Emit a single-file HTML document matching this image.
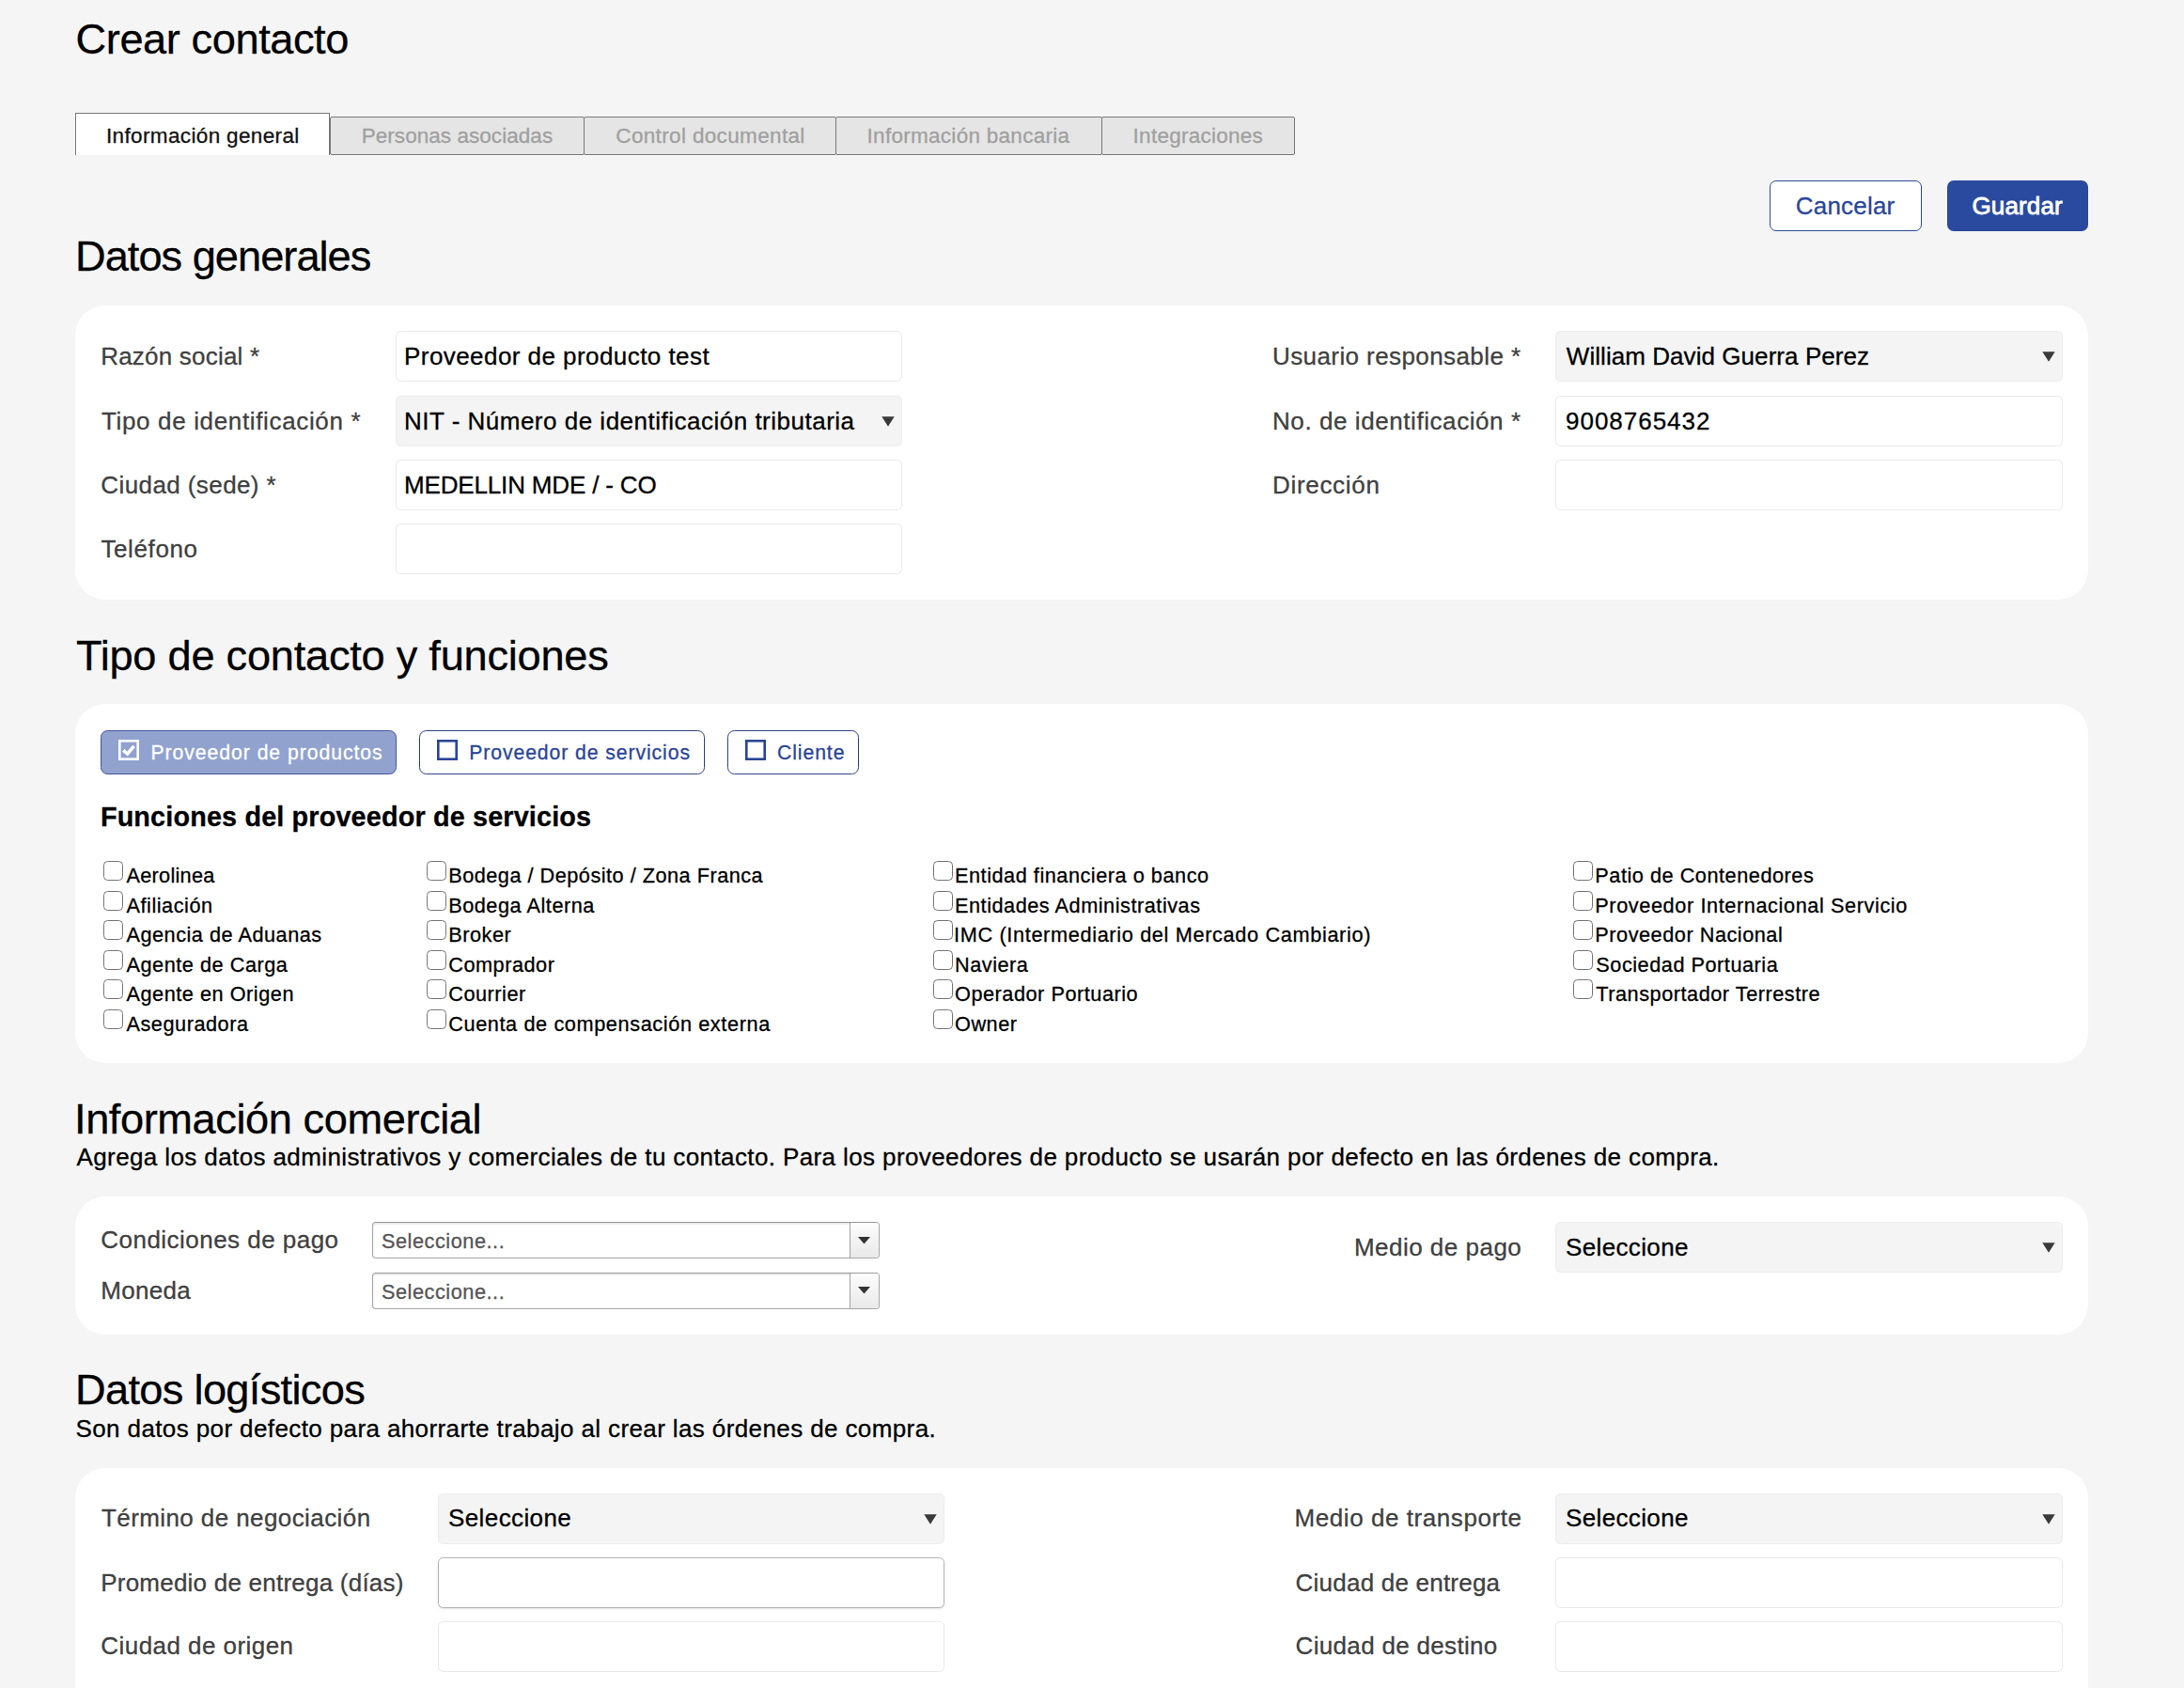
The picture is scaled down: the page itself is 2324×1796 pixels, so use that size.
<!DOCTYPE html>
<html lang="es"><head><meta charset="utf-8"><title>Crear contacto</title>
<style>
html,body{margin:0;padding:0}
@media (max-width:1400px){html{zoom:.5}}
body{width:2324px;height:1796px;overflow:hidden;background:#f5f5f5;font-family:"Liberation Sans",sans-serif;position:relative}
.t{position:absolute;margin:0;padding:0;white-space:nowrap;line-height:1;font-weight:400;-webkit-text-stroke:0.3px}
.abs{position:absolute;display:block}
.card{position:absolute;background:#fff;border-radius:32px}
.tab{position:absolute;box-sizing:border-box;background:#e5e5e5;border:1.5px solid #787878;border-radius:2px}
.tab.on{background:#fff;border-bottom:none;border-radius:0}
.btn-o{position:absolute;box-sizing:border-box;background:#fff;border:1.5px solid #2a4799;border-radius:7px}
.btn-f{position:absolute;box-sizing:border-box;background:#2a4a9f;border-radius:7px}
.inp{position:absolute;box-sizing:border-box;background:#fff;border:1.4px solid #e9e9e9;border-radius:5.5px}
.inp.foc{border-color:#b4b4b4;box-shadow:0 1px 2.5px rgba(0,0,0,.12)}
.sel{position:absolute;box-sizing:border-box;background:#f4f4f4;border:1.4px solid #ececec;border-radius:5.5px}
.tb{position:absolute;box-sizing:border-box;background:#fff;border:1.5px solid #2f4289;border-radius:7.5px}
.tb.on{background:#91a2cf;border-color:#42549a}
.cb{position:absolute;box-sizing:border-box;width:21px;height:21px;background:#fff;border:1.8px solid #767676;border-radius:4.5px}
.combo{position:absolute;box-sizing:border-box;background:#fff;border:1.5px solid #a6a6a6;border-top-color:#999;border-radius:4px;box-shadow:inset 0 1.5px 2px rgba(0,0,0,.12)}
.combo i{position:absolute;right:0;top:0;bottom:0;width:29.5px;border-left:1.5px solid #a0a0a0;background:linear-gradient(#fdfdfd,#e9e9e9);border-radius:0 3px 3px 0}
</style></head>
<body>
<main>
<header>
<div class="tab on" style="left:80px;top:120px;width:271px;height:45px"></div>
<div class="tab" style="left:350.5px;top:124px;width:271.2px;height:41px"></div>
<div class="tab" style="left:620.5px;top:124px;width:269.0px;height:41px"></div>
<div class="tab" style="left:888.5px;top:124px;width:284.0px;height:41px"></div>
<div class="tab" style="left:1171.5px;top:124px;width:206.5px;height:41px"></div>
<div class="btn-o" style="left:1883px;top:192px;width:162px;height:54px"></div>
<div class="btn-f" style="left:2072px;top:192px;width:150px;height:54px"></div>
<h1 class="t" style="left:80.6px;top:19.0px;font-size:45.2px;letter-spacing:-0.43px;color:#000">Crear contacto</h1>
<span class="t" style="left:113.0px;top:134.2px;font-size:22.5px;letter-spacing:0.36px;color:#111">Información general</span>
<span class="t" style="left:384.7px;top:134.2px;font-size:22.5px;letter-spacing:0.05px;color:#a0a0a0">Personas asociadas</span>
<span class="t" style="left:655.3px;top:134.2px;font-size:22.5px;letter-spacing:0.35px;color:#a0a0a0">Control documental</span>
<span class="t" style="left:922.6px;top:134.2px;font-size:22.5px;letter-spacing:0.28px;color:#a0a0a0">Información bancaria</span>
<span class="t" style="left:1205.6px;top:134.2px;font-size:22.5px;letter-spacing:0.26px;color:#a0a0a0">Integraciones</span>
<span class="t" style="left:1910.8px;top:206.3px;font-size:26px;letter-spacing:0.20px;color:#2a4799">Cancelar</span>
<span class="t" style="left:2098.5px;top:206.3px;font-size:26px;letter-spacing:0.13px;color:#fff;-webkit-text-stroke:0.8px">Guardar</span>
</header>
<section id="datos-generales">
<div class="card" style="left:80px;top:324.5px;width:2142px;height:313.5px"></div>
<div class="inp" style="left:420.5px;top:352px;width:539px;height:54px"></div>
<div class="sel" style="left:420.5px;top:420.5px;width:539px;height:54px"></div>
<svg class="abs" style="left:937.8px;top:442.7px" width="14" height="11" viewBox="0 0 14 11"><path d="M0.3 0.3 L13.7 0.3 L7 10.8 Z" fill="#3a3a3a"/></svg>
<div class="inp" style="left:420.5px;top:489px;width:539px;height:54px"></div>
<div class="inp" style="left:420.5px;top:557.3px;width:539px;height:54px"></div>
<div class="sel" style="left:1655px;top:352px;width:540px;height:54px"></div>
<svg class="abs" style="left:2173.3px;top:374.2px" width="14" height="11" viewBox="0 0 14 11"><path d="M0.3 0.3 L13.7 0.3 L7 10.8 Z" fill="#3a3a3a"/></svg>
<div class="inp" style="left:1655px;top:420.5px;width:540px;height:54px"></div>
<div class="inp" style="left:1655px;top:489px;width:540px;height:54px"></div>
<h2 class="t" style="left:80.0px;top:249.7px;font-size:45.2px;letter-spacing:-0.98px;color:#000">Datos generales</h2>
<label class="t" style="left:107.2px;top:366.0px;font-size:26px;letter-spacing:0.21px;color:#404040">Razón social *</label>
<label class="t" style="left:108.0px;top:434.5px;font-size:26px;letter-spacing:0.65px;color:#404040">Tipo de identificación *</label>
<label class="t" style="left:107.3px;top:503.0px;font-size:26px;letter-spacing:0.41px;color:#404040">Ciudad (sede) *</label>
<label class="t" style="left:107.4px;top:571.3px;font-size:26px;letter-spacing:0.62px;color:#404040">Teléfono</label>
<span class="t" style="left:430.0px;top:366.0px;font-size:26px;letter-spacing:0.44px;color:#000">Proveedor de producto test</span>
<span class="t" style="left:430.0px;top:434.5px;font-size:26px;letter-spacing:0.50px;color:#000">NIT - Número de identificación tributaria</span>
<span class="t" style="left:430.0px;top:503.0px;font-size:26px;letter-spacing:-0.16px;color:#000">MEDELLIN MDE / - CO</span>
<label class="t" style="left:1354.0px;top:366.0px;font-size:26px;letter-spacing:0.41px;color:#404040">Usuario responsable *</label>
<label class="t" style="left:1354.0px;top:434.5px;font-size:26px;letter-spacing:0.57px;color:#404040">No. de identificación *</label>
<label class="t" style="left:1354.0px;top:503.0px;font-size:26px;letter-spacing:0.69px;color:#404040">Dirección</label>
<span class="t" style="left:1666.8px;top:366.0px;font-size:26px;letter-spacing:0.06px;color:#000">William David Guerra Perez</span>
<span class="t" style="left:1666.0px;top:434.5px;font-size:26px;letter-spacing:0.98px;color:#000">9008765432</span>
</section>
<section id="tipo-contacto">
<div class="card" style="left:80px;top:748.7px;width:2142px;height:382.3px"></div>
<div class="tb on" style="left:107px;top:777px;width:314.7px;height:46.7px"></div>
<div class="tb" style="left:446px;top:777px;width:304px;height:46.5px"></div>
<div class="tb" style="left:774px;top:777px;width:140px;height:46.5px"></div>
<svg class="abs" style="left:126.1px;top:787px" width="22" height="22" viewBox="0 0 22 22"><rect x="1.3" y="1.3" width="19.4" height="19.4" fill="none" stroke="#fff" stroke-width="2.6"/><path d="M5.2 11.3 L9.6 15 L16.6 6.8" fill="none" stroke="#fff" stroke-width="3.5"/></svg>
<svg class="abs" style="left:465.1px;top:787px" width="22" height="22" viewBox="0 0 22 22"><rect x="1.3" y="1.3" width="19.4" height="19.4" fill="none" stroke="#2a4596" stroke-width="2.6"/></svg>
<svg class="abs" style="left:792.8px;top:787px" width="22" height="22" viewBox="0 0 22 22"><rect x="1.3" y="1.3" width="19.4" height="19.4" fill="none" stroke="#2a4596" stroke-width="2.6"/></svg>
<div class="cb" style="left:110px;top:916.3px"></div>
<div class="cb" style="left:110px;top:947.8px"></div>
<div class="cb" style="left:110px;top:979.3px"></div>
<div class="cb" style="left:110px;top:1010.8px"></div>
<div class="cb" style="left:110px;top:1042.3px"></div>
<div class="cb" style="left:110px;top:1073.8px"></div>
<div class="cb" style="left:453.7px;top:916.3px"></div>
<div class="cb" style="left:453.7px;top:947.8px"></div>
<div class="cb" style="left:453.7px;top:979.3px"></div>
<div class="cb" style="left:453.7px;top:1010.8px"></div>
<div class="cb" style="left:453.7px;top:1042.3px"></div>
<div class="cb" style="left:453.7px;top:1073.8px"></div>
<div class="cb" style="left:992.5px;top:916.3px"></div>
<div class="cb" style="left:992.5px;top:947.8px"></div>
<div class="cb" style="left:992.5px;top:979.3px"></div>
<div class="cb" style="left:992.5px;top:1010.8px"></div>
<div class="cb" style="left:992.5px;top:1042.3px"></div>
<div class="cb" style="left:992.5px;top:1073.8px"></div>
<div class="cb" style="left:1673.8px;top:916.3px"></div>
<div class="cb" style="left:1673.8px;top:947.8px"></div>
<div class="cb" style="left:1673.8px;top:979.3px"></div>
<div class="cb" style="left:1673.8px;top:1010.8px"></div>
<div class="cb" style="left:1673.8px;top:1042.3px"></div>
<h2 class="t" style="left:81.0px;top:674.5px;font-size:45.2px;letter-spacing:-0.25px;color:#000">Tipo de contacto y funciones</h2>
<span class="t" style="left:160.5px;top:790.4px;font-size:21.2px;letter-spacing:0.95px;color:#fff">Proveedor de productos</span>
<span class="t" style="left:499.2px;top:790.4px;font-size:21.2px;letter-spacing:0.92px;color:#2a4596">Proveedor de servicios</span>
<span class="t" style="left:826.9px;top:790.4px;font-size:21.2px;letter-spacing:0.94px;color:#2a4596">Cliente</span>
<h3 class="t" style="left:106.9px;top:854.5px;font-size:28.8px;letter-spacing:0.15px;color:#000;font-weight:700">Funciones del proveedor de servicios</h3>
<label class="t" style="left:134.5px;top:921.0px;font-size:21.7px;letter-spacing:0.27px;color:#000">Aerolinea</label>
<label class="t" style="left:134.5px;top:952.5px;font-size:21.7px;letter-spacing:0.53px;color:#000">Afiliación</label>
<label class="t" style="left:134.5px;top:984.0px;font-size:21.7px;letter-spacing:0.51px;color:#000">Agencia de Aduanas</label>
<label class="t" style="left:134.5px;top:1015.5px;font-size:21.7px;letter-spacing:0.53px;color:#000">Agente de Carga</label>
<label class="t" style="left:134.5px;top:1047.0px;font-size:21.7px;letter-spacing:0.53px;color:#000">Agente en Origen</label>
<label class="t" style="left:134.5px;top:1078.5px;font-size:21.7px;letter-spacing:0.53px;color:#000">Aseguradora</label>
<label class="t" style="left:477.2px;top:921.0px;font-size:21.7px;letter-spacing:0.50px;color:#000">Bodega / Depósito / Zona Franca</label>
<label class="t" style="left:477.2px;top:952.5px;font-size:21.7px;letter-spacing:0.53px;color:#000">Bodega Alterna</label>
<label class="t" style="left:477.2px;top:984.0px;font-size:21.7px;letter-spacing:0.53px;color:#000">Broker</label>
<label class="t" style="left:477.2px;top:1015.5px;font-size:21.7px;letter-spacing:0.53px;color:#000">Comprador</label>
<label class="t" style="left:477.2px;top:1047.0px;font-size:21.7px;letter-spacing:0.53px;color:#000">Courrier</label>
<label class="t" style="left:477.2px;top:1078.5px;font-size:21.7px;letter-spacing:0.61px;color:#000">Cuenta de compensación externa</label>
<label class="t" style="left:1016.0px;top:921.0px;font-size:21.7px;letter-spacing:0.53px;color:#000">Entidad financiera o banco</label>
<label class="t" style="left:1016.0px;top:952.5px;font-size:21.7px;letter-spacing:0.53px;color:#000">Entidades Administrativas</label>
<label class="t" style="left:1015.0px;top:984.0px;font-size:21.7px;letter-spacing:0.66px;color:#000">IMC (Intermediario del Mercado Cambiario)</label>
<label class="t" style="left:1016.0px;top:1015.5px;font-size:21.7px;letter-spacing:0.53px;color:#000">Naviera</label>
<label class="t" style="left:1016.0px;top:1047.0px;font-size:21.7px;letter-spacing:0.53px;color:#000">Operador Portuario</label>
<label class="t" style="left:1016.0px;top:1078.5px;font-size:21.7px;letter-spacing:0.53px;color:#000">Owner</label>
<label class="t" style="left:1697.3px;top:921.0px;font-size:21.7px;letter-spacing:0.53px;color:#000">Patio de Contenedores</label>
<label class="t" style="left:1697.3px;top:952.5px;font-size:21.7px;letter-spacing:0.60px;color:#000">Proveedor Internacional Servicio</label>
<label class="t" style="left:1697.3px;top:984.0px;font-size:21.7px;letter-spacing:0.53px;color:#000">Proveedor Nacional</label>
<label class="t" style="left:1698.3px;top:1015.5px;font-size:21.7px;letter-spacing:0.53px;color:#000">Sociedad Portuaria</label>
<label class="t" style="left:1698.3px;top:1047.0px;font-size:21.7px;letter-spacing:0.53px;color:#000">Transportador Terrestre</label>
</section>
<section id="informacion-comercial">
<div class="card" style="left:80px;top:1273px;width:2142px;height:147px"></div>
<div class="combo" style="left:396.3px;top:1299.7px;width:539.3px;height:39px"><i></i></div>
<svg class="abs" style="left:913.3px;top:1315.6px" width="13" height="8" viewBox="0 0 13 8"><path d="M0 0 L13 0 L6.5 7.5 Z" fill="#333"/></svg>
<div class="combo" style="left:396.3px;top:1353.5px;width:539.3px;height:39px"><i></i></div>
<svg class="abs" style="left:913.3px;top:1369.4px" width="13" height="8" viewBox="0 0 13 8"><path d="M0 0 L13 0 L6.5 7.5 Z" fill="#333"/></svg>
<div class="sel" style="left:1655px;top:1300px;width:540px;height:54px"></div>
<svg class="abs" style="left:2173.3px;top:1322.2px" width="14" height="11" viewBox="0 0 14 11"><path d="M0.3 0.3 L13.7 0.3 L7 10.8 Z" fill="#3a3a3a"/></svg>
<h2 class="t" style="left:79.0px;top:1168.0px;font-size:45.2px;letter-spacing:-0.42px;color:#000">Información comercial</h2>
<p class="t" style="left:81.5px;top:1217.6px;font-size:26px;letter-spacing:0.39px;color:#000">Agrega los datos administrativos y comerciales de tu contacto. Para los proveedores de producto se usarán por defecto en las órdenes de compra.</p>
<label class="t" style="left:107.3px;top:1306.3px;font-size:26px;letter-spacing:0.47px;color:#404040">Condiciones de pago</label>
<label class="t" style="left:107.2px;top:1360.0px;font-size:26px;letter-spacing:0.30px;color:#404040">Moneda</label>
<span class="t" style="left:405.9px;top:1310.2px;font-size:21.7px;letter-spacing:0.55px;color:#555">Seleccione...</span>
<span class="t" style="left:405.9px;top:1364.0px;font-size:21.7px;letter-spacing:0.55px;color:#555">Seleccione...</span>
<label class="t" style="left:1440.9px;top:1314.0px;font-size:26px;letter-spacing:0.49px;color:#404040">Medio de pago</label>
<span class="t" style="left:1666.0px;top:1314.0px;font-size:26px;letter-spacing:0.36px;color:#000">Seleccione</span>
</section>
<section id="datos-logisticos">
<div class="card" style="left:80px;top:1562px;width:2142px;height:338px"></div>
<div class="sel" style="left:466px;top:1588.8px;width:539px;height:54px"></div>
<svg class="abs" style="left:983.3px;top:1611.0px" width="14" height="11" viewBox="0 0 14 11"><path d="M0.3 0.3 L13.7 0.3 L7 10.8 Z" fill="#3a3a3a"/></svg>
<div class="inp foc" style="left:466px;top:1657px;width:539px;height:54px"></div>
<div class="inp" style="left:466px;top:1724.6px;width:539px;height:54px"></div>
<div class="sel" style="left:1655px;top:1588.8px;width:540px;height:54px"></div>
<svg class="abs" style="left:2173.3px;top:1611.0px" width="14" height="11" viewBox="0 0 14 11"><path d="M0.3 0.3 L13.7 0.3 L7 10.8 Z" fill="#3a3a3a"/></svg>
<div class="inp" style="left:1655px;top:1657px;width:540px;height:54px"></div>
<div class="inp" style="left:1655px;top:1724.6px;width:540px;height:54px"></div>
<h2 class="t" style="left:80.0px;top:1455.8px;font-size:45.2px;letter-spacing:-0.68px;color:#000">Datos logísticos</h2>
<p class="t" style="left:80.5px;top:1506.5px;font-size:26px;letter-spacing:0.39px;color:#000">Son datos por defecto para ahorrarte trabajo al crear las órdenes de compra.</p>
<label class="t" style="left:108.0px;top:1602.4px;font-size:26px;letter-spacing:0.41px;color:#404040">Término de negociación</label>
<label class="t" style="left:107.2px;top:1670.6px;font-size:26px;letter-spacing:0.23px;color:#404040">Promedio de entrega (días)</label>
<label class="t" style="left:107.3px;top:1738.2px;font-size:26px;letter-spacing:0.45px;color:#404040">Ciudad de origen</label>
<span class="t" style="left:477.0px;top:1602.4px;font-size:26px;letter-spacing:0.40px;color:#000">Seleccione</span>
<label class="t" style="left:1377.6px;top:1602.4px;font-size:26px;letter-spacing:0.56px;color:#404040">Medio de transporte</label>
<label class="t" style="left:1378.6px;top:1670.6px;font-size:26px;letter-spacing:0.22px;color:#404040">Ciudad de entrega</label>
<label class="t" style="left:1378.6px;top:1738.2px;font-size:26px;letter-spacing:0.32px;color:#404040">Ciudad de destino</label>
<span class="t" style="left:1666.0px;top:1602.4px;font-size:26px;letter-spacing:0.36px;color:#000">Seleccione</span>
</section>
</main>
</body></html>
